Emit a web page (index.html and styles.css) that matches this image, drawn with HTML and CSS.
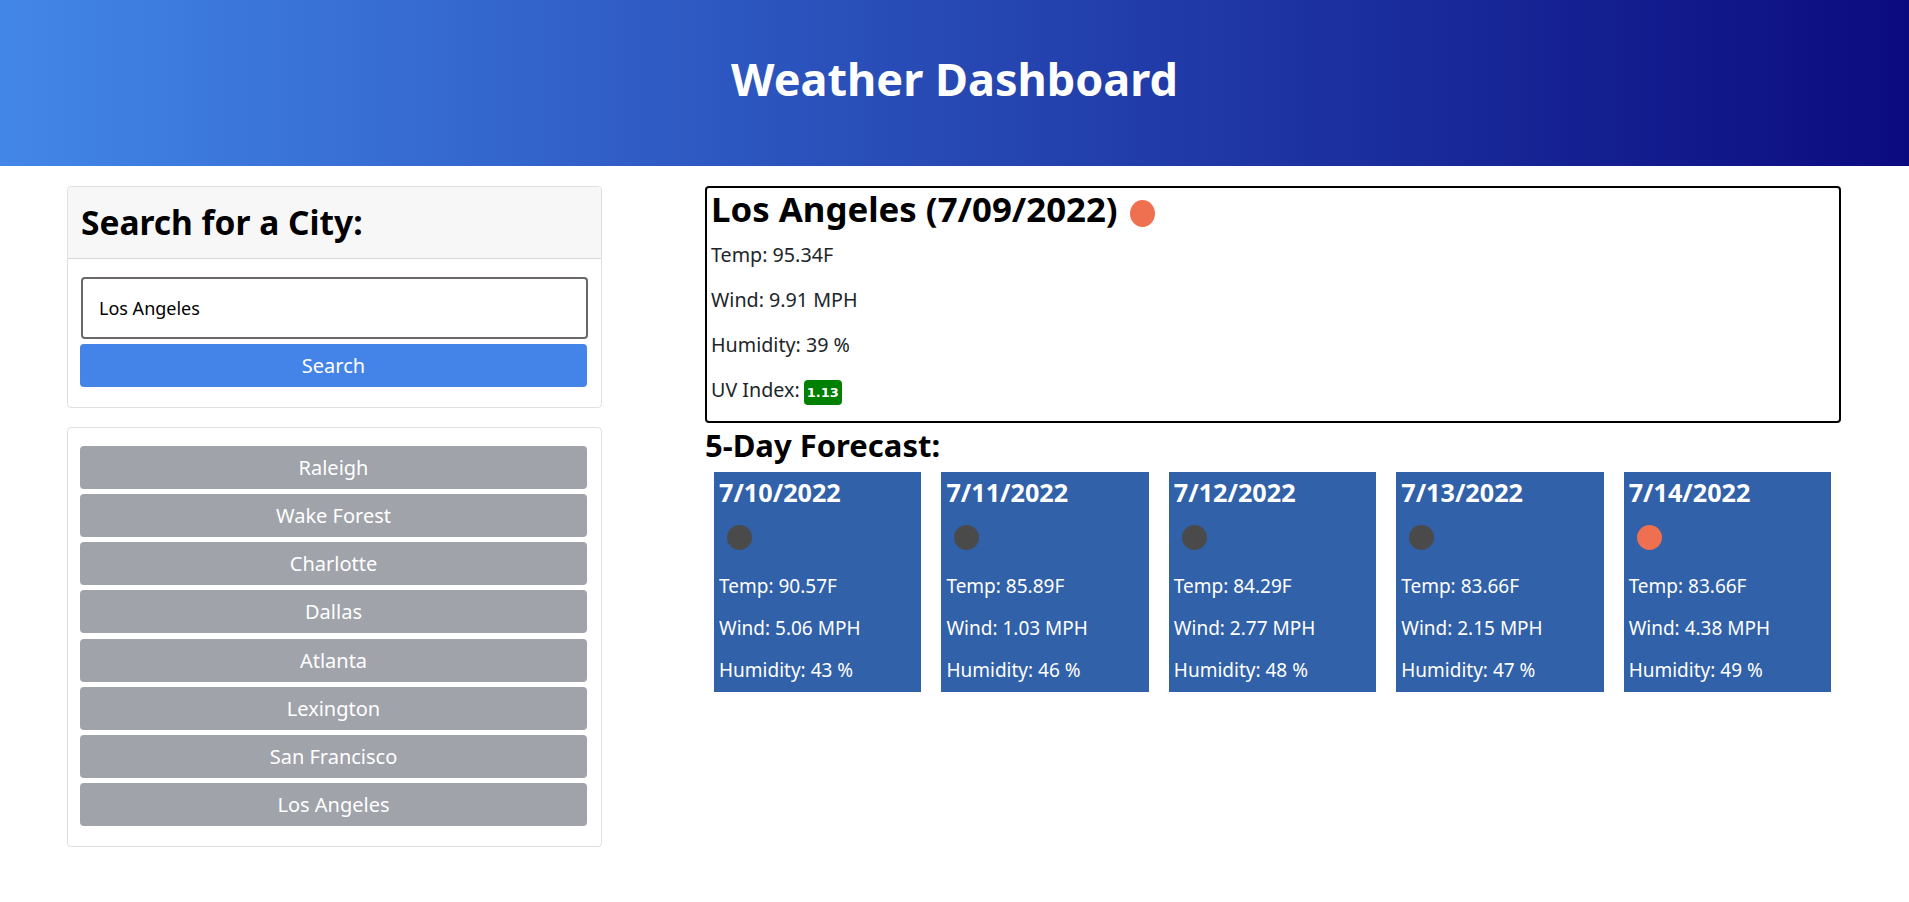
FILE: index.html
```html
<!DOCTYPE html>
<html lang="en">
<head>
<meta charset="utf-8">
<title>Weather Dashboard</title>
<link rel="stylesheet" href="styles.css">
</head>
<body>
<header class="hero"><h1 class="hero-title">Weather Dashboard</h1></header>
<main class="layout">
  <aside class="sidebar">
    <section class="card">
      <div class="card-header"><h2 class="card-title">Search for a City:</h2></div>
      <div class="card-body">
        <input class="city-input" type="text" value="Los Angeles">
        <button class="btn btn-primary">Search</button>
      </div>
    </section>
    <section class="card">
      <div class="card-body history">
        <button class="btn btn-grey">Raleigh</button>
        <button class="btn btn-grey">Wake Forest</button>
        <button class="btn btn-grey">Charlotte</button>
        <button class="btn btn-grey">Dallas</button>
        <button class="btn btn-grey">Atlanta</button>
        <button class="btn btn-grey">Lexington</button>
        <button class="btn btn-grey">San Francisco</button>
        <button class="btn btn-grey">Los Angeles</button>
      </div>
    </section>
  </aside>
  <div class="content">
    <section class="current">
      <h2 class="current-title">Los Angeles (7/09/2022) <span class="dot dot-big"></span></h2>
      <p class="stat">Temp: 95.34F</p>
      <p class="stat">Wind: 9.91 MPH</p>
      <p class="stat">Humidity: 39 %</p>
      <p class="stat">UV Index: <span class="uv">1.13</span></p>
    </section>
    <h3 class="forecast-title">5-Day Forecast:</h3>
    <div class="forecast">
      <article class="day"><h4 class="day-date">7/10/2022</h4><span class="dot dot-dark"></span><p class="day-stat">Temp: 90.57F</p><p class="day-stat">Wind: 5.06 MPH</p><p class="day-stat">Humidity: 43 %</p></article>
      <article class="day"><h4 class="day-date">7/11/2022</h4><span class="dot dot-dark"></span><p class="day-stat">Temp: 85.89F</p><p class="day-stat">Wind: 1.03 MPH</p><p class="day-stat">Humidity: 46 %</p></article>
      <article class="day"><h4 class="day-date">7/12/2022</h4><span class="dot dot-dark"></span><p class="day-stat">Temp: 84.29F</p><p class="day-stat">Wind: 2.77 MPH</p><p class="day-stat">Humidity: 48 %</p></article>
      <article class="day"><h4 class="day-date">7/13/2022</h4><span class="dot dot-dark"></span><p class="day-stat">Temp: 83.66F</p><p class="day-stat">Wind: 2.15 MPH</p><p class="day-stat">Humidity: 47 %</p></article>
      <article class="day"><h4 class="day-date">7/14/2022</h4><span class="dot dot-red"></span><p class="day-stat">Temp: 83.66F</p><p class="day-stat">Wind: 4.38 MPH</p><p class="day-stat">Humidity: 49 %</p></article>
    </div>
  </div>
</main>
</body>
</html>
```
FILE: styles.css
```css
* { box-sizing: border-box; }
body { margin: 0; background: #fff; color: #212529; font-family: "Noto Sans", sans-serif; font-size: 18px; }
h1, h2, h3, h4, p { margin: 0; }
.hero { height: 166px; padding-bottom: 8px; background: linear-gradient(90deg, #4286e8, #0b0b7f); display: flex; align-items: center; justify-content: center; }
.hero-title { color: #fff; font-size: 45px; font-weight: 700; line-height: 1.2; }
.layout { display: flex; gap: 103px; padding: 20px 68px 0 67px; }
.sidebar { width: 535px; flex: none; display: flex; flex-direction: column; gap: 19px; }
.card { border: 1px solid rgba(0,0,0,.125); border-radius: 4px; }
.card-header { height: 72px; padding: 0 13px 2px; display: flex; align-items: center; background: #f7f7f7; border-bottom: 1px solid rgba(0,0,0,.125); border-radius: 3px 3px 0 0; }
.card-title { font-size: 33.5px; font-weight: 700; color: #000; }
.card-body { padding: 18px 14px 20px 12px; }
.city-input { display: block; width: 100%; height: 62px; margin: 0 0 5px 1px; padding: 0 16px; border: 2px solid #6b6767; border-radius: 4px; font: inherit; color: #000; background: #fff; }
.btn { display: block; width: 100%; height: 43px; border: 0; border-radius: 4px; color: #fff; font-family: inherit; font-size: 20px; }
.btn-primary { background: #4484e8; }
.btn-grey { background: #a0a3aa; }
.history { display: flex; flex-direction: column; gap: 5.17px; padding-top: 18px; padding-bottom: 20px; }
.content { flex: 1; min-width: 0; }
.current { height: 237px; border: 2px solid #000; border-radius: 4px; padding: 0 5px 0 4px; }
.current-title { font-size: 34.8px; font-weight: 700; color: #000; line-height: 42px; display: flex; align-items: center; gap: 12px; }
.stat { font-size: 19.7px; line-height: 27px; margin-top: 18px; color: #212529; }
.current-title + .stat { margin-top: 11px; }
.dot { display: block; border-radius: 50%; }
.dot-big { width: 25px; height: 27px; background: #ee7050; margin-top: 9px; }
.dot-dark { width: 25px; height: 25px; background: #4a4a4a; margin: 17px 0 0 8px; }
.dot-red { width: 25px; height: 25px; background: #ee7050; margin: 17px 0 0 8px; }
.uv { display: inline-block; margin-left: -1px; background: #008000; color: #fff; border-radius: 4px; font-family: "DejaVu Sans", sans-serif; font-size: 13px; line-height: 25px; height: 25px; font-weight: 700; padding: 0 3px; }
.forecast-title { font-size: 31px; font-weight: 700; color: #000; line-height: 42px; margin-top: 1px; }
.forecast { display: flex; gap: 20px; padding: 6px 10px 0 9px; }
.day { flex: 1; height: 220px; background: #3161a8; color: #fff; padding: 0 5px; }
.day-date { font-size: 25.2px; font-weight: 700; line-height: 32px; padding-top: 4px; height: 36px; }
.day-stat { font-size: 19px; line-height: 26px; margin-top: 16px; }
.dot + .day-stat { margin-top: 23px; }
```
